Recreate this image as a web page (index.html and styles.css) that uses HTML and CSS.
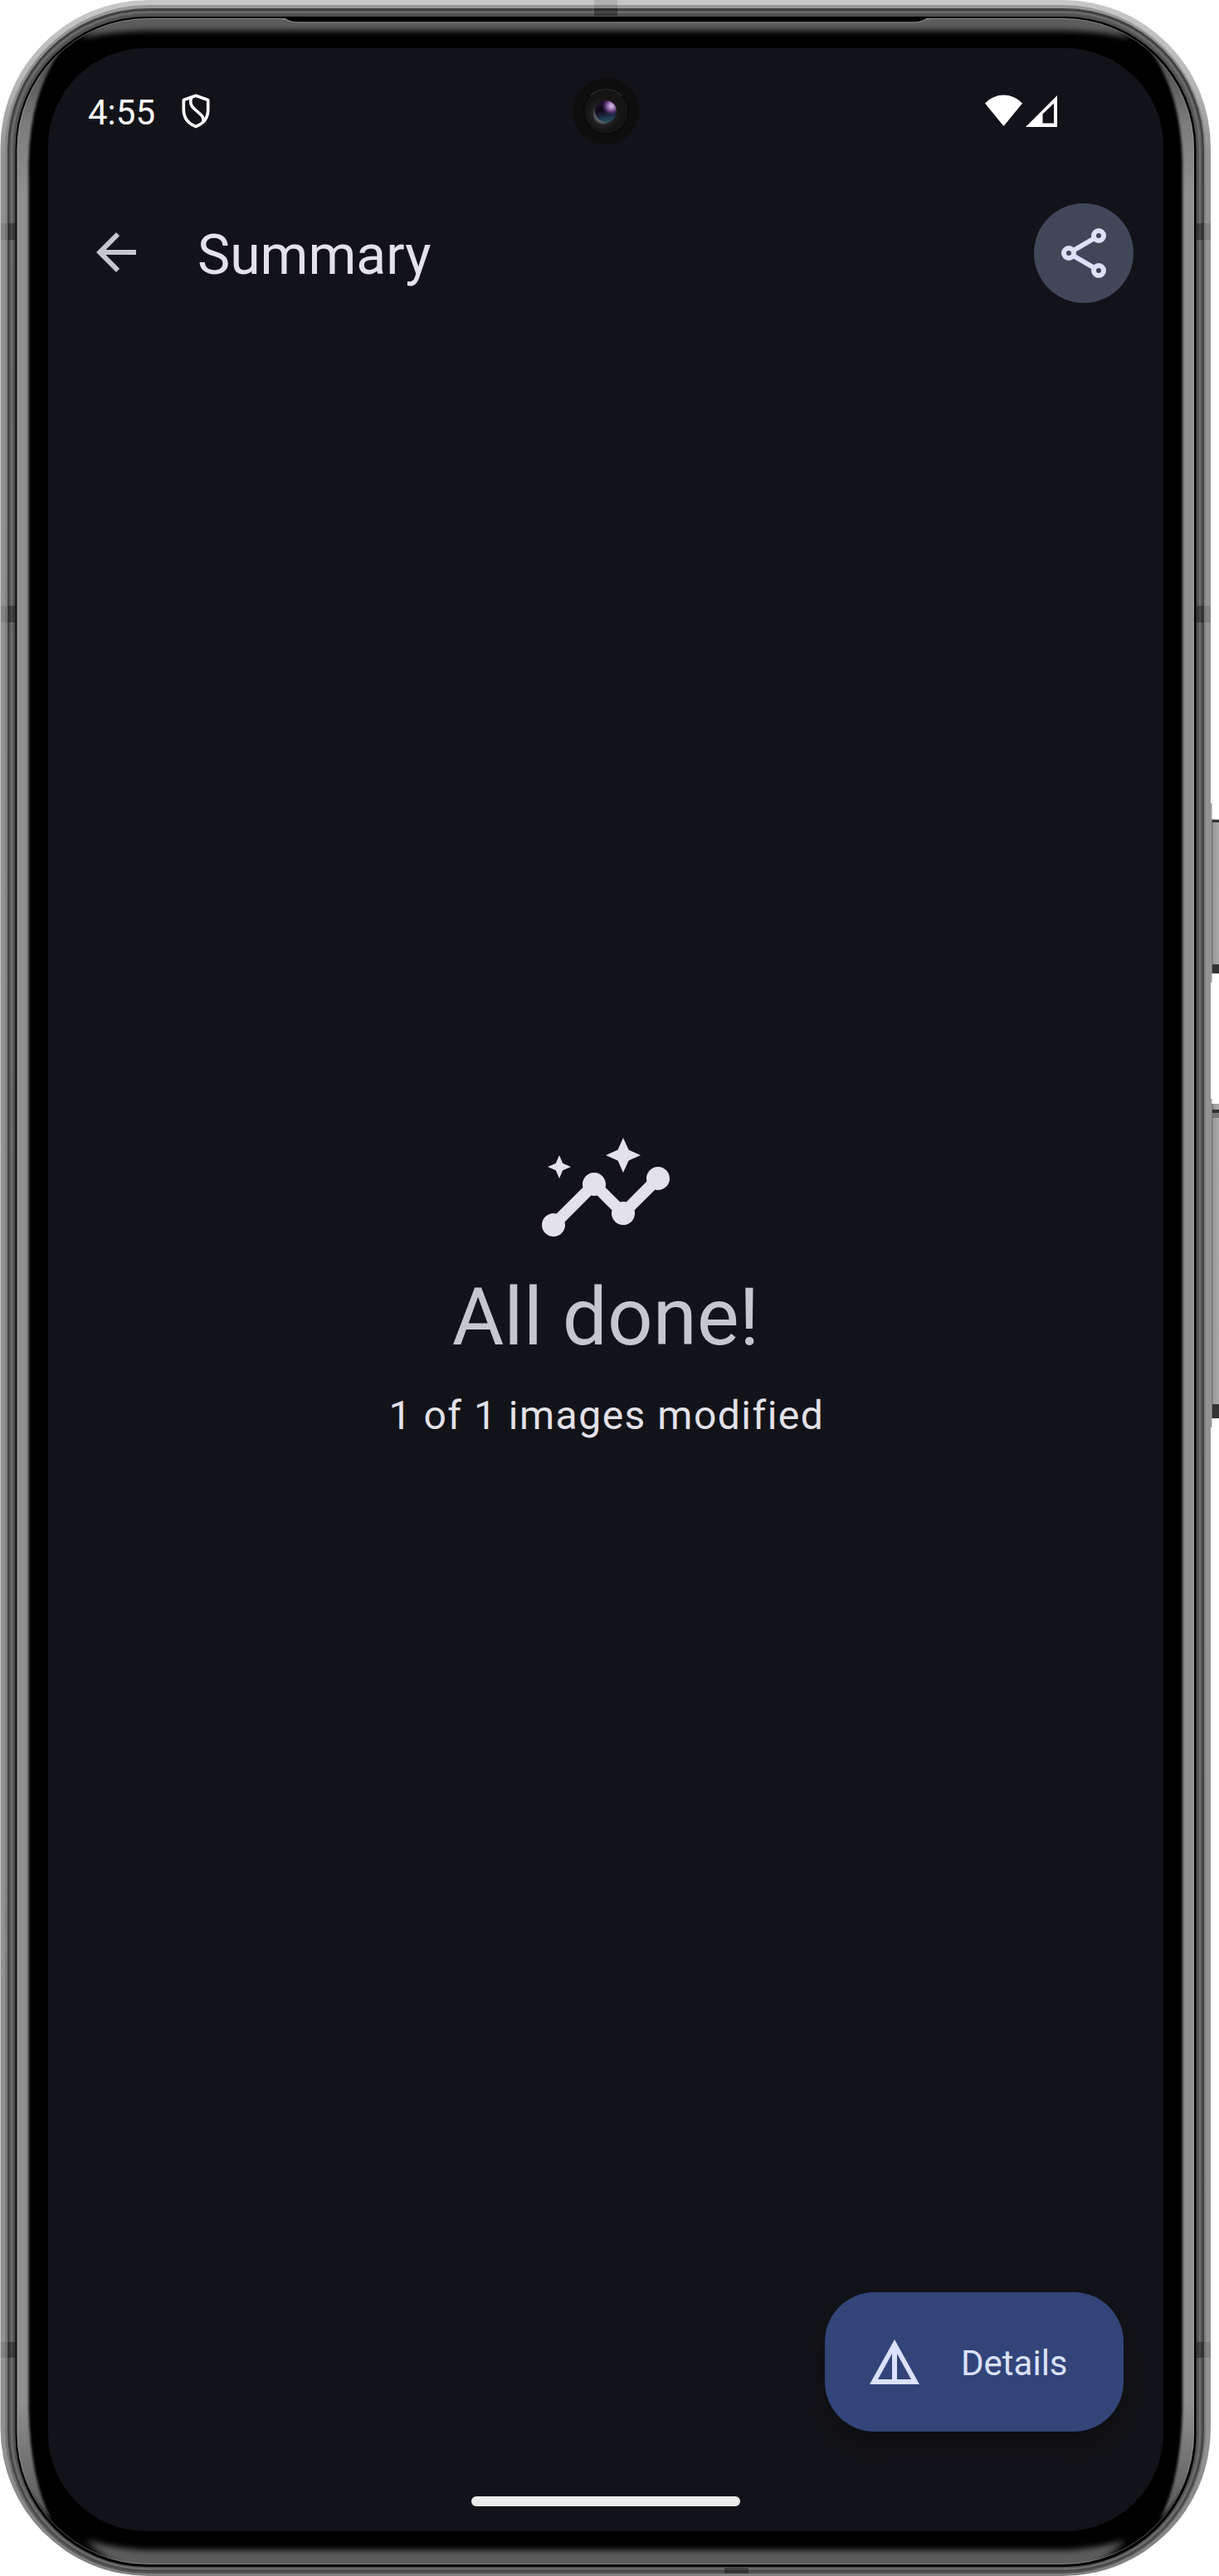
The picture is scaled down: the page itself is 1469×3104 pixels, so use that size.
FILE: index.html
```html
<!DOCTYPE html>
<html lang="en">
<head>
<meta charset="utf-8">
<title>Summary</title>
<link rel="stylesheet" href="styles.css">
</head>
<body>
<div class="phone">
  <svg class="frame" viewBox="0 0 1469 3104" aria-hidden="true">
    <defs>
      <linearGradient id="rim" x1="0" y1="0" x2="0" y2="3104" gradientUnits="userSpaceOnUse">
        <stop offset="0" stop-color="#c6c8c6"/><stop offset=".03" stop-color="#b8b8b8"/><stop offset=".06" stop-color="#929292"/><stop offset=".95" stop-color="#929292"/><stop offset="1" stop-color="#808080"/>
      </linearGradient>
      <linearGradient id="rim2" x1="0" y1="0" x2="0" y2="3104" gradientUnits="userSpaceOnUse">
        <stop offset="0" stop-color="#999"/><stop offset=".06" stop-color="#848484"/><stop offset=".94" stop-color="#7c7c7c"/><stop offset="1" stop-color="#505050"/>
      </linearGradient>
      <linearGradient id="sideGlint" x1="0" y1="60" x2="0" y2="3040" gradientUnits="userSpaceOnUse">
        <stop offset="0" stop-color="#444"/><stop offset=".03" stop-color="#7c7c7c"/><stop offset=".06" stop-color="#909090"/><stop offset=".95" stop-color="#909090"/><stop offset="1" stop-color="#555"/>
      </linearGradient>
      <linearGradient id="button" x1="1460" y1="0" x2="1469" y2="0" gradientUnits="userSpaceOnUse">
        <stop offset="0" stop-color="#666"/><stop offset=".25" stop-color="#999"/><stop offset="1" stop-color="#aaa"/>
      </linearGradient>
      <filter id="softSide" filterUnits="userSpaceOnUse" x="0" y="0" width="1469" height="3104"><feGaussianBlur stdDeviation="1.800"/></filter>
      <filter id="softEnd" filterUnits="userSpaceOnUse" x="0" y="0" width="1469" height="3104"><feGaussianBlur stdDeviation="5 3.500"/></filter>
      <clipPath id="glass"><rect x="20.500" y="22" width="1418.500" height="3068" rx="158"/></clipPath>
    </defs>

    <g>
      <rect x="1459" y="968" width="1.500" height="216" fill="#999"/>
      <rect x="1459" y="1324" width="1.500" height="396" fill="#999"/>
      <rect x="1460" y="987" width="12" height="186" fill="url(#button)"/>
      <rect x="1461" y="988" width="12" height="3" fill="#333"/>
      <rect x="1461" y="1162" width="12" height="11" fill="#333"/>
      <rect x="1460" y="1330" width="12" height="379" fill="url(#button)"/>
      <rect x="1461" y="1337" width="12" height="4" fill="#333"/>
      <rect x="1461" y="1341" width="12" height="6" fill="#777"/>
      <rect x="1461" y="1692" width="12" height="17" fill="#333"/>
    </g>

    <rect x=".500" y="0" width="1458.500" height="3104" rx="178" fill="url(#rim)"/>
    <rect x="6" y="6" width="1447" height="3095" rx="173" fill="url(#rim2)"/>
    <rect x="9" y="10" width="1442" height="3088" rx="169" fill="#424242"/>
    <rect x="11.500" y="13" width="1437" height="3084" rx="166" fill="#5c5c5c"/>
    <rect x="14" y="14.500" width="1432" height="3081" rx="164" fill="none" stroke="#707070" stroke-width="1.500"/>
    <rect x="16" y="17" width="1427.500" height="3077" rx="162" fill="#505050"/>
    <rect x="18.500" y="20" width="1423" height="3073" rx="159" fill="#000"/>

    <g clip-path="url(#glass)">
      <g fill="#5c5c5c" filter="url(#softEnd)">
        <path d="M174 10H1286Q1330 14 1362 46Q1330 38 1286 37H174Q130 38 98 46Q130 14 174 10Z"/>
        <path d="M174 3102H1286Q1330 3092 1356 3060Q1330 3070 1286 3073H174Q130 3070 104 3060Q130 3092 174 3102Z"/>
      </g>
      <g fill="url(#sideGlint)" filter="url(#softSide)">
        <path d="M12 180Q16 100 74 60Q36 112 34.500 196V2904Q37 2990 62 3036Q18 2990 12 2920Z"/>
        <path d="M1447.500 180Q1443.500 100 1385.500 60Q1423.500 112 1425 196V2904Q1422.500 2990 1397.500 3036Q1441.500 2990 1447.500 2920Z"/>
      </g>
    </g>
    <rect x="21" y="22.500" width="1417.500" height="3067" rx="157" fill="none" stroke="#aaa" stroke-opacity=".5"/>
    <path d="M338 20Q344 22 350 25Q354 26.500 360 26.500H1100Q1106 26.500 1110 25Q1116 22 1122 20Z" fill="#000"/>
    <path d="M338 22.500Q344 23 350 26Q354 27 360 27H1100Q1106 27 1110 26Q1116 23 1122 22.500" fill="none" stroke="#888"/>

    <g fill="#000">
      <path d="M10 269h8v20h-8zM10 730h8v20h-8zM10 2822h8v19h-8zM1442 269h8v20h-8zM1442 730h8v20h-8zM1442 2822h8v19h-8zM716 10h28v9H716zM873 3094h29v7h-29z" opacity=".35"/>
      <path d="M1 269h9v20H1zM1 730h9v20H1zM1 2822h9v19H1zM1450 269h9v20h-9zM1450 730h9v20h-9zM1450 2822h9v19h-9zM716 0h28v10H716z" opacity=".1"/>
    </g>
  </svg>

  <main class="screen">
    <header class="status">
      <span class="clock">4:55</span>
      <svg class="shield" viewBox="0 0 34 42" fill="none" stroke="#fff" stroke-width="3.600" stroke-linejoin="round">
        <path d="M17 2.300L2.300 7.500V19C2.300 29 8 36 17 39.500C26 36 31.700 29 31.700 19V7.500Z"/>
        <path d="M11.500 5C9.500 11 11 14.500 16 19C23 25 27 27 26 34"/>
      </svg>
      <svg class="signals" viewBox="0 0 88 40" fill="#fff">
        <path d="M1 10.500C14-2.800 33-2.800 46 10.500L23.500 38Z"/>
        <path fill-rule="evenodd" d="M50 39L88 1V39ZM70.500 34.500H84V10.500L70.500 23.500Z"/>
      </svg>
    </header>

    <nav class="appbar">
      <svg class="back" viewBox="0 0 48 48"><path d="M48 21H11.500L28.200 4.200L24 0L0 24L24 48L28.200 43.800L11.500 27H48Z" fill="#c6c6d0"/></svg>
      <h1 class="title">Summary</h1>
      <button class="share" aria-label="Share">
        <svg viewBox="0 0 54 60" fill="none" stroke="#dee1f9" stroke-width="6">
          <path d="M14.200 27L40 12M14.200 33L40 48"/>
          <circle cx="45" cy="9" r="6"/><circle cx="9" cy="30" r="6"/><circle cx="45" cy="51" r="6"/>
        </svg>
      </button>
    </nav>

    <section class="result">
      <svg class="insights" viewBox="0 0 24 24" fill="#e3e1e9">
        <path d="M21,8c-1.450,0-2.260,1.440-1.930,2.510l-3.550,3.560c-0.300-0.090-0.740-0.090-1.040,0l-2.550-2.550C12.270,10.450,11.460,9,10,9c-1.450,0-2.270,1.440-1.930,2.520l-4.560,4.550C2.440,15.740,1,16.550,1,18c0,1.100,0.900,2,2,2c1.450,0,2.260-1.440,1.930-2.510l4.550-4.560c0.300,0.090,0.740,0.090,1.040,0l2.550,2.550C12.730,16.550,13.540,18,15,18c1.450,0,2.270-1.440,1.930-2.520l3.560-3.550C21.560,12.260,23,11.450,23,10C23,8.900,22.100,8,21,8z"/>
        <path d="M15,9l0.940-2.070L18,6l-2.060-0.930L15,3l-0.920,2.070L12,6l2.080,0.930z"/>
        <path d="M4,10l0.600-1.400L6,8L4.600,7.400L4,6L3.400,7.400L2,8l1.400,0.600z"/>
      </svg>
      <h2 class="headline">All done!</h2>
      <p class="detail">1 of 1 images modified</p>
    </section>

    <button class="fab">
      <svg class="prism" viewBox="0 0 60 54"><path fill="#dbe1ff" fill-rule="evenodd" d="M30 0L60 54H0ZM27 17L10 48H27ZM33 17V48H50Z"/></svg>
      <span class="fab-label">Details</span>
    </button>
    <div class="home"></div>
  </main>

  <div class="camera"><div class="ring"><div class="lens"></div></div></div>
</div>
</body>
</html>
```
FILE: styles.css
```css
* { box-sizing: border-box; }
body { margin: 0; background: #fff; font-family: Roboto, sans-serif; }
h1, h2, p { margin: 0; font-weight: 400; }
button { border: 0; padding: 0; font: inherit; }
svg { display: block; flex: none; }

.phone { position: relative; width: 1469px; height: 3104px; padding: 58px 67px 54px 58px; overflow: hidden; }
.frame { position: absolute; inset: 0; width: 1469px; height: 3104px; }
.screen { position: relative; display: flex; flex-direction: column; height: 2992px; border-radius: 118px; background: #121318; }

.status { display: flex; align-items: center; height: 156px; padding: 0 128px 0 48px; }
.clock { color: #fff; font-size: 42px; line-height: 48px; }
.shield { width: 34px; height: 42px; margin: 0 0 5px 32px; }
.signals { width: 88px; height: 40px; margin: 0 0 5px auto; }

.appbar { display: flex; align-items: center; height: 182px; padding: 0 36px 0 58px; }
.back { width: 48px; height: 48px; margin-bottom: 3px; }
.title { margin-left: 74px; padding-top: 6px; color: #e3e1e9; font-size: 66px; line-height: 84px; }
.share { display: grid; place-items: center; width: 120px; height: 120px; margin-left: auto; border-radius: 50%; background: #424659; }
.share svg { width: 54px; height: 60px; }

.result { display: flex; flex: 1; flex-direction: column; align-items: center; padding-top: 954px; }
.insights { width: 168px; height: 168px; }
.headline { margin-top: 11px; color: #c6c6d0; font-size: 96px; line-height: 116px; }
.detail { margin-top: 25px; padding-left: 2px; color: #e3e1e9; font-size: 48px; line-height: 72px; letter-spacing: 1.500px; }

.fab { display: flex; align-items: center; align-self: flex-end; width: 360px; height: 168px; margin-right: 48px; padding-left: 54px; border-radius: 60px; background: #324478; box-shadow: 0 18px 30px rgba(14, 14, 16, .75); }
.prism { width: 60px; height: 54px; }
.fab-label { margin-left: 50px; padding-top: 3px; color: #dbe1ff; font-size: 42px; line-height: 60px; }

.home { align-self: center; width: 324px; height: 12px; margin: 78px 0 30px; border-radius: 6px; background: #ececec; }

.camera { position: absolute; left: 690px; top: 94px; display: grid; place-items: center; width: 80px; height: 80px; border-radius: 50%; background: #0e0e0e; }
.ring { display: grid; place-items: center; width: 55px; height: 55px; border: 1px solid #050505; border-top-color: #2a2a2a; border-radius: 50%; background: radial-gradient(circle at 43% 56%, #666 0 22%, #222 30%, #141414 48%); }
.lens { width: 26px; height: 26px; border-radius: 50%; background: radial-gradient(circle at 76% 26%, #d8c4ec 0, #a57cba 14%, #4b2c64 28%, transparent 40%), linear-gradient(170deg, #241030, #100818 45%, #2c5a70); }
```
